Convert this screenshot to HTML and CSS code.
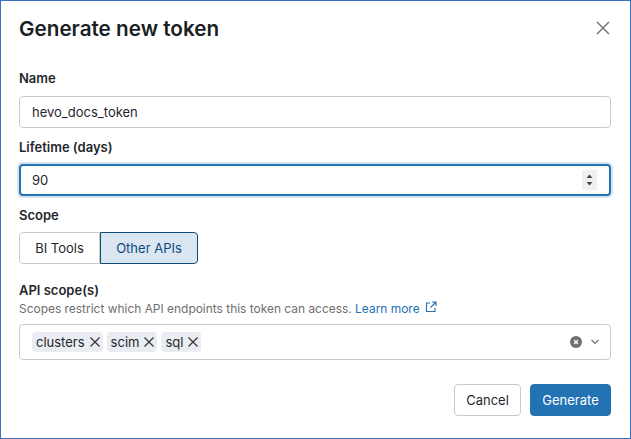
FILE: index.html
```html
<!DOCTYPE html>
<html>

<head>
    <link rel="stylesheet" href="styles.css">
</head>

<body>
    <div class="dialog">
        <div class="dialog-header">
            <h2>Generate new token</h2>
            <svg class="close-icon" width="14" height="14" viewBox="0 0 14 14">
                <path d="M1 1L13 13M13 1L1 13" stroke="#6f6f6f" stroke-width="1.4" fill="none" />
            </svg>
        </div>

        <form class="token-form">
            <label class="name-label">Name</label>
            <div class="field">hevo_docs_token</div>

            <label class="lifetime-label">Lifetime (days)</label>
            <div class="field field-focus">
                <span>90</span>
                <span class="spinner">
                    <svg width="15" height="20" viewBox="0 0 15 20">
                        <path d="M7.5 4.5L10.5 8H4.5Z" fill="#4a4a4a" />
                        <path d="M7.5 15.5L10.5 12H4.5Z" fill="#4a4a4a" />
                    </svg>
                </span>
            </div>

            <label class="scope-label">Scope</label>
            <div class="segments">
                <button type="button" class="segment">BI Tools</button>
                <button type="button" class="segment segment-active">Other APIs</button>
            </div>

            <label class="api-label">API scope(s)</label>
            <p class="hint">
                Scopes restrict which API endpoints this token can access.
                <a href="#">Learn more
                    <svg class="link-icon" width="12" height="12" viewBox="0 0 12 12">
                        <path d="M5 2H1.5V10.5H10V7M7 1H11V5M11 1L5.5 6.5" stroke="#2272b4" stroke-width="1.1" fill="none" />
                    </svg>
                </a>
            </p>
            <div class="select">
                <span class="tag">clusters
                    <svg width="10" height="10" viewBox="0 0 10 10"><path d="M.5 .5L9.5 9.5M9.5 .5L.5 9.5" stroke="#333" stroke-width="1.2" fill="none" /></svg>
                </span>
                <span class="tag">scim
                    <svg width="10" height="10" viewBox="0 0 10 10"><path d="M.5 .5L9.5 9.5M9.5 .5L.5 9.5" stroke="#333" stroke-width="1.2" fill="none" /></svg>
                </span>
                <span class="tag">sql
                    <svg width="10" height="10" viewBox="0 0 10 10"><path d="M.5 .5L9.5 9.5M9.5 .5L.5 9.5" stroke="#333" stroke-width="1.2" fill="none" /></svg>
                </span>
                <span class="select-icons">
                    <svg width="12" height="12" viewBox="0 0 12 12">
                        <circle cx="6" cy="6" r="6" fill="#6f6f6f" />
                        <path d="M4 4L8 8M8 4L4 8" stroke="#fff" stroke-width="1.3" fill="none" />
                    </svg>
                    <svg width="10" height="6" viewBox="0 0 10 6">
                        <path d="M1.5 1L5 4.5L8.5 1" stroke="#6f6f6f" stroke-width="1.2" fill="none" />
                    </svg>
                </span>
            </div>

            <div class="actions">
                <button type="button" class="btn btn-cancel">Cancel</button>
                <button type="button" class="btn btn-primary">Generate</button>
            </div>
        </form>
    </div>
</body>

</html>
```

FILE: styles.css
```css
html,
body {
    margin: 0;
    padding: 0;
}

body {
    font-family: Inter, "Liberation Sans", sans-serif;
    font-size: 13px;
    color: #1f272d;
    background-color: #fff;
}

.dialog {
    box-sizing: border-box;
    width: 631px;
    height: 439px;
    padding: 0 19px 0 18px;
    border: 1px solid #3a70c4;
    background-color: #fff;
}

.dialog-header {
    display: flex;
    justify-content: space-between;
    align-items: center;
    height: 54px;
}

.dialog-header h2 {
    margin: 0;
    font-size: 20.7px;
    font-weight: 600;
    color: #1a1f24;
}

.close-icon {
    margin-right: 1px;
}

label {
    display: block;
    font-weight: 600;
    line-height: 16px;
}

.name-label {
    margin-top: 15px;
    margin-bottom: 10px;
}

.lifetime-label {
    margin-top: 11px;
    margin-bottom: 9px;
}

.scope-label {
    margin-top: 11px;
    margin-bottom: 9px;
}

.api-label {
    margin-top: 18px;
    margin-bottom: 3px;
}

.field {
    box-sizing: border-box;
    display: flex;
    justify-content: space-between;
    align-items: center;
    height: 32px;
    padding: 0 12px;
    border: 1px solid #cbcbcb;
    border-radius: 4px;
}

.field-focus {
    padding: 0 11px;
    border: 2px solid #2272b4;
    box-shadow: 0 0 0 2px #d3e3f1;
}

.spinner {
    display: flex;
    width: 15px;
    height: 20px;
    margin-right: 1px;
    background-color: #f0f0f0;
}

.segments {
    display: flex;
}

.segment {
    box-sizing: border-box;
    height: 32px;
    padding: 0;
    font-family: inherit;
    font-size: 13px;
    color: #1f272d;
    background-color: #fff;
    border: 1px solid #cbcbcb;
    border-radius: 4px 0 0 4px;
    width: 81px;
}

.segment-active {
    width: 98px;
    color: #0e4a7c;
    background-color: #dae6f1;
    border-color: #0e4a7c;
    border-radius: 0 4px 4px 0;
}

.hint {
    margin: 0 0 7px;
    line-height: 16px;
    font-size: 11.95px;
    color: #6f6f6f;
}

.hint a {
    color: #2272b4;
    text-decoration: none;
}

.link-icon {
    margin-left: 2px;
}

.select {
    box-sizing: border-box;
    display: flex;
    align-items: center;
    gap: 4px;
    height: 36px;
    padding: 0 12px;
    border: 1px solid #cbcbcb;
    border-radius: 4px;
}

.tag {
    display: flex;
    align-items: center;
    gap: 5px;
    height: 20px;
    padding: 0 3px 0 4px;
    border-radius: 4px;
    color: #1f272d;
    background-color: #e9ecf0;
}

.select-icons {
    display: flex;
    align-items: center;
    gap: 8px;
    margin-left: auto;
    margin-right: -2px;
}

.actions {
    display: flex;
    justify-content: flex-end;
    gap: 9px;
    margin-top: 24px;
}

.btn {
    box-sizing: border-box;
    height: 32px;
    padding: 0;
    font-family: inherit;
    font-size: 13px;
    color: #1f272d;
    background-color: #fff;
    border: 1px solid #cbcbcb;
    border-radius: 4px;
    cursor: pointer;
}

.btn-cancel {
    width: 67px;
}

.btn-primary {
    width: 81px;
    color: #fff;
    background-color: #2272b4;
    border-color: #2272b4;
}
```
